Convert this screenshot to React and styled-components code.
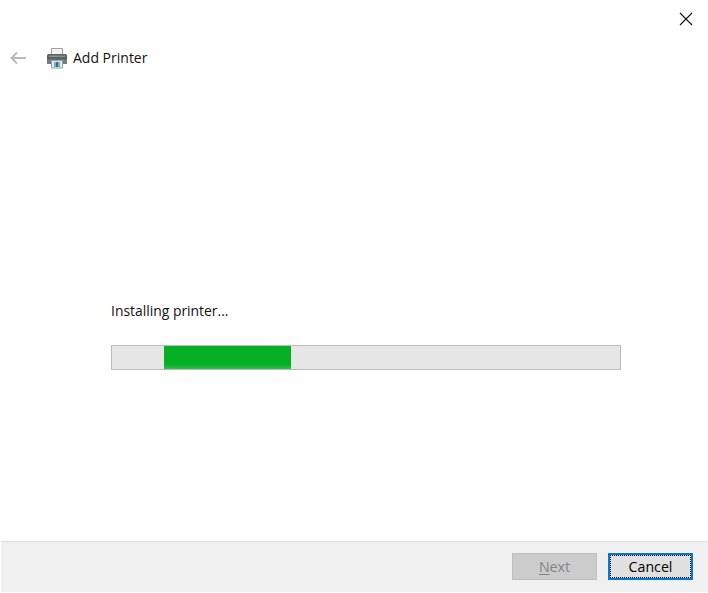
import styled, { createGlobalStyle } from 'styled-components';

const GlobalStyle = createGlobalStyle`
    html, body {
        margin: 0;
        padding: 0;
        background: #fff;
    }
`

const Dialog = styled.div`
    width: 708px;
    height: 593px;
    display: flex;
    flex-direction: column;
    box-sizing: border-box;
    background: #fff;
    color: #000;
    font-family: "Open Sans", "Noto Sans", sans-serif;
    font-size: 14px;
    overflow: hidden;
`

const TitleBar = styled.div`
    height: 38px;
    display: flex;
    justify-content: flex-end;
    align-items: flex-start;
    padding: 12px 15px 0 0;
    box-sizing: border-box;
`

const CloseIcon = styled.svg`
    width: 14px;
    height: 14px;
    display: block;
`

const Header = styled.div`
    height: 40px;
    display: flex;
    align-items: center;
    padding-left: 10px;
`

const BackIcon = styled.svg`
    width: 17px;
    height: 14px;
    display: block;
    margin-right: 19px;
`

const PrinterIcon = styled.svg`
    width: 22px;
    height: 22px;
    display: block;
    margin-right: 5px;
`

const HeaderTitle = styled.div`
    font-size: 14px;
    line-height: 20px;
    color: #111;
`

const Main = styled.div`
    flex: 1;
    padding: 223px 0 0 111px;
`

const Status = styled.div`
    font-size: 13.9px;
    line-height: 20px;
    color: #111;
    margin-bottom: 24px;
`

const ProgressTrack = styled.div`
    width: 510px;
    height: 25px;
    box-sizing: border-box;
    border: 1px solid #bcbcbc;
    background: #e6e6e6;
    padding-left: 52px;
`

const ProgressChunk = styled.div`
    width: 127px;
    height: 100%;
    background: linear-gradient(to bottom, #06b025 0, #06b025 19px, #33c04f 23px);
`

const Footer = styled.div`
    height: 51px;
    box-sizing: border-box;
    margin-left: 1px;
    margin-bottom: 1px;
    border-top: 1px solid #dfdfdf;
    background: #f0f0f0;
    display: flex;
    justify-content: flex-end;
    gap: 11px;
    padding: 11px 15px 0 0;
`

const Button = styled.button`
    width: 85px;
    height: 27px;
    box-sizing: border-box;
    padding: 0;
    font-family: inherit;
    font-size: 14.2px;
    line-height: 20px;
    color: ${p => p.disabled ? '#838383' : '#000'};
    background: ${p => p.disabled ? '#cccccc' : '#e1e1e1'};
    border: 1px solid ${p => p.disabled ? '#bfbfbf' : '#adadad'};
    outline: none;
    position: relative;

    ${p => p.$focused && `
        border: 2px solid #0078d7;

        &::after {
            content: "";
            position: absolute;
            inset: 0;
            border: 1px dotted #000;
        }
    `}

    u {
        text-underline-offset: 2px;
    }
`

export default function App() {
    return (
        <Dialog>
            <GlobalStyle />

            <TitleBar>
                <CloseIcon viewBox="0 0 14 14">
                    <path d="M1 1 L13 13 M13 1 L1 13" stroke="#111" strokeWidth="1.1" fill="none" />
                </CloseIcon>
            </TitleBar>

            <Header>
                <BackIcon viewBox="0 0 17 14">
                    <path d="M7 1.5 L1.5 7 L7 12.5 M1.5 7 H16" stroke="#b9b9b9" strokeWidth="1.8" fill="none" />
                </BackIcon>

                <PrinterIcon viewBox="0 0 22 22">
                    <path d="M5.5 1.5 H16.5 V8 H5.5 Z" fill="#f2f2f2" stroke="#a0a0a0" />
                    <rect x="1" y="7" width="20" height="10" rx="1.5" fill="#5b6265" />
                    <rect x="1" y="12.5" width="20" height="4.5" fill="#767b7e" />
                    <rect x="3" y="8.5" width="16" height="1.5" fill="#8b9295" />
                    <path d="M5.5 13.5 H16.5 V21 H5.5 Z" fill="#e4eaec" stroke="#9aa2a5" />
                    <rect x="8" y="15" width="6" height="5" fill="#6fb5bb" />
                    <rect x="10" y="15" width="2" height="5" fill="#2b6f98" />
                </PrinterIcon>

                <HeaderTitle>Add Printer</HeaderTitle>
            </Header>

            <Main>
                <Status>Installing printer...</Status>

                <ProgressTrack>
                    <ProgressChunk />
                </ProgressTrack>
            </Main>

            <Footer>
                <Button disabled><u>N</u>ext</Button>
                <Button $focused>Cancel</Button>
            </Footer>
        </Dialog>
    )
}
